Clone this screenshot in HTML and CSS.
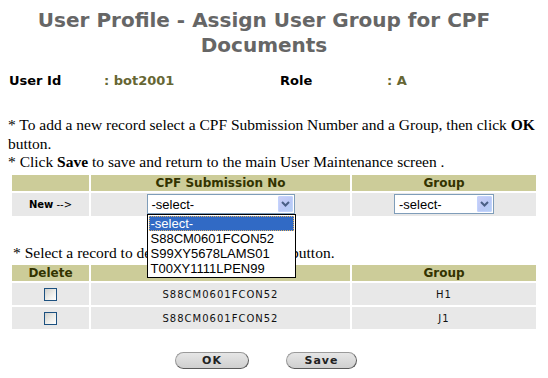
FILE: index.html
```html
<!DOCTYPE html>
<html>
<head>
<meta charset="utf-8">
<title>User Profile - Assign User Group for CPF Documents</title>
<link rel="stylesheet" href="styles.css">
</head>
<body>
<h1 class="title">User Profile - Assign User Group for CPF Documents</h1>

<div class="info">
  <span class="lbl">User Id</span><span class="val">: bot2001</span>
  <span class="lbl">Role</span><span class="val">: A</span>
</div>

<p class="note">* To add a new record select a CPF Submission Number and a Group, then click <b>OK</b><br>button.<br>* Click <b>Save</b> to save and return to the main User Maintenance screen .</p>

<table class="grid grid-new">
  <colgroup><col class="col1"><col class="col2"><col></colgroup>
  <tr class="head"><th></th><th>CPF Submission No</th><th>Group</th></tr>
  <tr class="row row-new">
    <td class="new"><b>New</b> --&gt;</td>
    <td>
      <div class="sel-wrap">
        <div class="sel sel-cpf"><span class="sel-text">-select-</span><span class="sel-btn"><svg width="9" height="6" viewBox="0 0 9 6"><path d="M1 1 L4.5 4.5 L8 1" fill="none" stroke="#4a5f86" stroke-width="2"/></svg></span></div>
        <ul class="list">
          <li class="on">-select-</li>
          <li>S88CM0601FCON52</li>
          <li>S99XY5678LAMS01</li>
          <li>T00XY1111LPEN99</li>
        </ul>
      </div>
    </td>
    <td>
      <div class="sel sel-grp"><span class="sel-text">-select-</span><span class="sel-btn"><svg width="9" height="6" viewBox="0 0 9 6"><path d="M1 1 L4.5 4.5 L8 1" fill="none" stroke="#4a5f86" stroke-width="2"/></svg></span></div>
    </td>
  </tr>
</table>

<p class="note note2">* Select a record to delete and then click the button.</p>

<table class="grid grid-list">
  <colgroup><col class="col1"><col class="col2"><col></colgroup>
  <tr class="head"><th>Delete</th><th></th><th>Group</th></tr>
  <tr class="row"><td><input type="checkbox" class="chk"></td><td class="data">S88CM0601FCON52</td><td class="data">H1</td></tr>
  <tr class="row"><td><input type="checkbox" class="chk"></td><td class="data">S88CM0601FCON52</td><td class="data">J1</td></tr>
</table>

<div class="actions">
  <button class="btn btn-ok">OK</button>
  <button class="btn btn-save">Save</button>
</div>
</body>
</html>
```

FILE: styles.css
```css
body {
  margin: 8px;
  font-family: "Liberation Serif", serif;
  background: #ffffff;
  color: #000;
}

.title {
  margin: 0;
  padding-right: 20px;
  font-family: "DejaVu Sans", sans-serif;
  font-size: 20px;
  line-height: 25px;
  font-weight: bold;
  color: #666666;
  text-align: center;
}

.info {
  display: grid;
  grid-template-columns: 95px 176px 107px auto;
  margin: 15px 0 0 1px;
  font-family: "DejaVu Sans", sans-serif;
  font-size: 13px;
  line-height: 16px;
  font-weight: bold;
}

.lbl { color: #000; }
.val { color: #666633; }

.note {
  margin: 27px 0 0 0;
  font-size: 15.5px;
  line-height: 18.5px;
  white-space: nowrap;
}

.note2 {
  margin: 26px 0 0 0;
  padding-left: 5px;
}

.grid {
  margin: 1px 0 0 2px;
  width: 528px;
  border-spacing: 2px;
  table-layout: fixed;
  font-family: "DejaVu Sans", sans-serif;
}

.col1 { width: 77px; }
.col2 { width: 259px; }

.grid td, .grid th {
  padding: 0;
  text-align: center;
}

.head th {
  height: 16px;
  background: #cccc99;
  color: #333300;
  font-size: 12px;
  font-weight: bold;
  line-height: 16px;
}

.row td {
  height: 22px;
  background: #e8e8e8;
  vertical-align: middle;
}

.row-new td { height: 23px; }

.new {
  font-size: 10px;
  color: #000;
}

.sel-wrap {
  position: relative;
  display: inline-block;
  vertical-align: middle;
}

.sel {
  display: flex;
  align-items: center;
  justify-content: space-between;
  box-sizing: border-box;
  height: 20px;
  border: 1px solid #7f9db9;
  background: #fff;
  font-family: "Liberation Sans", sans-serif;
  font-size: 13px;
  text-align: left;
  padding: 1px 1px 1px 4px;
  vertical-align: middle;
}

.sel-cpf { width: 148px; }
.sel-grp { width: 100px; margin: 0 auto; }

.sel-btn {
  display: flex;
  align-items: center;
  justify-content: center;
  width: 15px;
  height: 16px;
  border-radius: 2px;
  background: linear-gradient(135deg, #cdd0f7 0%, #b9c8f6 60%, #b4d2f4 100%);
  box-shadow: inset 0 0 0 1px #c3d3fd;
}

.list {
  position: absolute;
  left: 0;
  top: 20px;
  margin: 0;
  padding: 1px;
  list-style: none;
  width: 149px;
  box-sizing: border-box;
  border: 1px solid #000;
  background: #fff;
  font-family: "Liberation Sans", sans-serif;
  font-size: 13px;
  text-align: left;
  z-index: 2;
}

.list li {
  height: 15px;
  line-height: 15px;
  padding-left: 2px;
  color: #000;
}

.list li.on {
  background: #316ac5;
  color: #fff;
  outline: 1px dotted #e0b060;
  outline-offset: -1px;
}

.chk {
  appearance: none;
  -webkit-appearance: none;
  display: block;
  margin: 0 auto;
  width: 13px;
  height: 13px;
  box-sizing: border-box;
  border: 1px solid #1c5180;
  background: linear-gradient(135deg, #d0d0cc 0%, #eeeeea 55%, #ffffff 100%);
}

.data {
  font-size: 10px;
  letter-spacing: 1px;
  color: #111;
}

.actions {
  display: flex;
  gap: 37px;
  margin-top: 21px;
  padding-left: 167px;
}

.btn {
  height: 17px;
  padding: 0;
  border: 1px solid #9a9a9a;
  border-right-color: #5a5a5a;
  border-bottom-color: #5a5a5a;
  border-radius: 9px;
  background: linear-gradient(#e6e6e6, #cfcfcf);
  font-family: "DejaVu Sans", sans-serif;
  font-size: 11px;
  font-weight: bold;
  letter-spacing: 1px;
  color: #222;
  line-height: 15px;
}

.btn-ok { width: 74px; }
.btn-save { width: 71px; }
```
